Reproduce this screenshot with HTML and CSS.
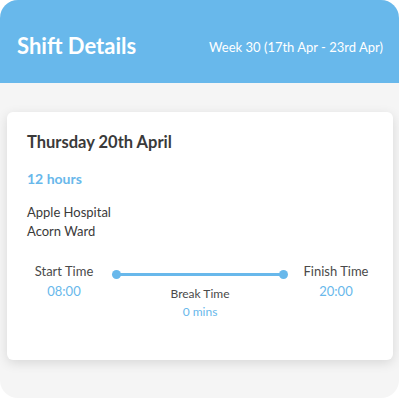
FILE: index.html
```html
<!DOCTYPE html>
<html lang="en">
<head>
    <meta charset="UTF-8">
    <meta name="viewport" content="width=device-width, initial-scale=1.0">
    <title>Shift Details</title>
    <link rel="stylesheet" href="styles.css">
</head>

<body>
    <div class="frame">
        <div class="header">
            <h2>Shift Details</h2>
            <span class="week">Week 30 (17th Apr - 23rd Apr)</span>
        </div>

        <div class="card">
            <h3>Thursday 20th April</h3>
            <p class="hours">12 hours</p>
            <p class="place">Apple Hospital<br>Acorn Ward</p>

            <div class="timeline">
                <div class="time">
                    <span class="label">Start Time</span>
                    <span class="value">08:00</span>
                </div>
                <div class="middle">
                    <div class="bar"></div>
                    <span class="label">Break Time</span>
                    <span class="value">0 mins</span>
                </div>
                <div class="time">
                    <span class="label">Finish Time</span>
                    <span class="value">20:00</span>
                </div>
            </div>
        </div>
    </div>
</body>
</html>
```

FILE: styles.css
```css
/* Page and outer frame */
body {
    font-family: Lato, "Open Sans", Arial, sans-serif;
    background-color: #ffffff;
    margin: 0;
}

.frame {
    width: 399px;
    height: 398px;
    background-color: #f5f5f5;
    border-radius: 18px;
    overflow: hidden;
}

/* Blue header */
.header {
    background-color: #68b8eb;
    height: 83px;
    display: flex;
    align-items: center;
    justify-content: space-between;
    padding: 0 16px 0 17px;
    box-sizing: border-box;
    color: #ffffff;
}

.header h2 {
    margin: 0;
    font-size: 22px;
    font-weight: 700;
    padding-top: 8px;
}

.week {
    font-size: 13px;
    padding-top: 10px;
}

/* Shift card */
.card {
    background-color: #ffffff;
    margin: 29px 6px 0 7px;
    height: 248px;
    border-radius: 6px;
    box-shadow: 0px 3px 12px rgba(0, 0, 0, 0.12);
    padding: 20px 20px 0 20px;
    box-sizing: border-box;
    color: #333333;
}

.card h3 {
    margin: 0;
    font-size: 16.5px;
    font-weight: 700;
    color: #3a3a3a;
}

.hours {
    margin: 18px 0 0 0;
    font-size: 14px;
    font-weight: 700;
    color: #68b8eb;
}

.place {
    margin: 16px 0 0 0;
    font-size: 13px;
    line-height: 18.5px;
    color: #3a3a3a;
}

/* Start / break / finish row */
.timeline {
    display: flex;
    align-items: flex-start;
    margin: 22px -3px 0 -3px;
}

.time, .middle {
    display: flex;
    flex-direction: column;
    align-items: center;
}

.time {
    width: 80px;
}

.middle {
    flex: 1;
    padding: 0 12px 0 12px;
}

.label {
    font-size: 13px;
    color: #4a4a4a;
    line-height: 18px;
}

.value {
    font-size: 13px;
    color: #68b8eb;
    line-height: 18px;
    margin-top: 2px;
}

.middle .label {
    font-size: 12px;
    margin-top: 9px;
}

.middle .value {
    font-size: 12px;
    margin-top: 0;
}

.bar {
    position: relative;
    width: 100%;
    height: 3px;
    margin-top: 11px;
    background-color: #68b8eb;
}

.bar::before, .bar::after {
    content: "";
    position: absolute;
    top: -3px;
    width: 9px;
    height: 9px;
    border-radius: 50%;
    background-color: #68b8eb;
}

.bar::before {
    left: -4px;
}

.bar::after {
    right: -4px;
}
```
